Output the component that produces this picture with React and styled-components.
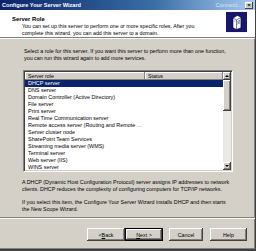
import React from 'react'
import styled, { createGlobalStyle } from 'styled-components'

const GlobalStyle = createGlobalStyle`
  html, body {
    margin: 0;
    padding: 0;
    background: #d4d0c8;
  }
  body {
    font-family: "Liberation Sans", Arial, sans-serif;
    -webkit-font-smoothing: antialiased;
  }
`

const Window = styled.div`
  width: 256px;
  height: 251px;
  box-sizing: border-box;
  display: flex;
  flex-direction: column;
  background: #d4d0c8;
  border-right: 1px solid #404040;
  border-bottom: 2px solid #404040;
  box-shadow: inset -1px -1px 0 #808080;
  overflow: hidden;
`
const TitleBar = styled.div`
  height: 10px;
  flex: none;
  display: flex;
  align-items: center;
  padding: 0 2px;
  background: linear-gradient(to right, #0a246a 0%, #3a6ea5 60%, #a6caf0 100%);
  color: white;
  font-size: 5.6px;
  font-weight: bold;
`
const TitleText = styled.span`
  flex: 1;
  white-space: nowrap;
`
const TitleGhost = styled.span`
  color: #d8e6f6;
  font-weight: normal;
  font-size: 5.8px;
  margin-right: 3px;
`
const CloseButton = styled.div`
  width: 8px;
  height: 7px;
  background: #d4d0c8;
  box-shadow: inset -1px -1px 0 #404040, inset 1px 1px 0 #ffffff;
  color: #000;
  font-size: 6px;
  line-height: 7px;
  text-align: center;
  font-weight: bold;
`
const Header = styled.div`
  height: 28px;
  box-sizing: border-box;
  flex: none;
  background: white;
  display: flex;
  justify-content: space-between;
  align-items: flex-start;
  padding: 0 8px 0 12px;
  border-bottom: 1px solid #808080;
  box-shadow: 0 1px 0 #ffffff;
`
const HeaderText = styled.div`
  padding-top: 6px;
`
const HeaderTitle = styled.div`
  font-size: 5.9px;
  font-weight: bold;
  color: #000;
  line-height: 7px;
`
const HeaderSub = styled.div`
  font-size: 5.3px;
  line-height: 6.5px;
  color: #000;
  padding-left: 10px;
  width: 190px;
`
const IconBox = styled.div`
  margin-top: 1px;
  line-height: 0;
`
const Body = styled.div`
  flex: 1;
  padding: 10px 20px 0 24px;
  font-size: 5.35px;
  line-height: 6.5px;
  color: #000;
  display: flex;
  flex-direction: column;
`
const Para = styled.p`
  margin: 0 0 ${(p) => p.gap || 0}px ${(p) => p.indent || 0}px;
  width: ${(p) => p.width || 205}px;
`
const ListView = styled.div`
  margin: 9px 0 7px -1px;
  width: 210px;
  height: 102px;
  box-sizing: border-box;
  background: white;
  border: 1px solid;
  border-color: #808080 #ffffff #ffffff #808080;
  box-shadow: inset 1px 1px 0 #404040, inset -1px -1px 0 #d4d0c8;
  display: flex;
  padding: 1px;
  font-size: 5.45px;
`
const ListMain = styled.div`
  flex: 1;
  display: flex;
  flex-direction: column;
  min-width: 0;
`
const HeaderRow = styled.div`
  display: flex;
  height: 8px;
  flex: none;
`
const ColHead = styled.div`
  width: ${(p) => p.width}px;
  flex: ${(p) => (p.width ? 'none' : 1)};
  box-sizing: border-box;
  background: #d4d0c8;
  box-shadow: inset -1px -1px 0 #808080, inset 1px 1px 0 #ffffff;
  padding-left: 3px;
  line-height: 8px;
  font-size: 5.3px;
`
const Row = styled.div`
  height: 7px;
  line-height: 7px;
  display: flex;
  background: ${(p) => (p.selected ? '#0a246a' : 'transparent')};
  color: ${(p) => (p.selected ? '#ffffff' : '#000000')};
`
const Cell = styled.div`
  width: ${(p) => p.width}px;
  flex: ${(p) => (p.width ? 'none' : 1)};
  box-sizing: border-box;
  padding: 0 2px 0 3px;
  white-space: nowrap;
  overflow: hidden;
  text-overflow: ellipsis;
`
const ScrollBar = styled.div`
  width: 8px;
  flex: none;
  display: flex;
  flex-direction: column;
  background-color: #ebe9e4;
`
const ScrollBtn = styled.div`
  height: 8px;
  flex: none;
  background: #d4d0c8;
  box-shadow: inset -1px -1px 0 #404040, inset 1px 1px 0 #ffffff, inset -2px -2px 0 #808080;
  display: flex;
  align-items: center;
  justify-content: center;
`
const Thumb = styled.div`
  height: 31px;
  flex: none;
  background: #d4d0c8;
  box-shadow: inset -1px -1px 0 #404040, inset 1px 1px 0 #ffffff, inset -2px -2px 0 #808080;
`
const Track = styled.div`
  flex: 1;
`
const Arrow = styled.div`
  width: 0;
  height: 0;
  border-left: 2px solid transparent;
  border-right: 2px solid transparent;
  ${(p) => (p.down ? 'border-top: 2px solid #000;' : 'border-bottom: 2px solid #000;')}
`
const Footer = styled.div`
  height: 29px;
  flex: none;
  border-top: 1px solid #808080;
  box-shadow: inset 0 1px 0 #ffffff;
  display: flex;
  align-items: center;
  justify-content: flex-end;
  padding: 2px 8px 0 0;
`
const ButtonGroup = styled.div`
  display: flex;
  margin-right: ${(p) => p.space || 0}px;
`
const Button = styled.div`
  width: ${(p) => p.w || 37}px;
  height: 13px;
  box-sizing: border-box;
  background: #d4d0c8;
  box-shadow: inset -1px -1px 0 #404040, inset 1px 1px 0 #ffffff, inset -2px -2px 0 #808080;
  border: ${(p) => (p.def ? '1px solid #000' : 'none')};
  display: flex;
  align-items: center;
  justify-content: center;
  font-size: 5.35px;
  color: #000;
  margin-left: ${(p) => p.gap || 0}px;
  u { text-decoration: underline; }
`

const ServerIcon = () => (
  <svg width="21" height="22" viewBox="0 0 24 23">
    <rect width="24" height="23" fill="#16166a" />
    <path d="M8 7 L13 4 L17 6 L17 18 L12 20 L8 18 Z" fill="#ffffff" stroke="#000033" strokeWidth="0.6" />
    <path d="M12 9 L17 6.5 M12 9 L8 7 M12 9 L12 20" stroke="#000033" strokeWidth="0.6" fill="none" />
    <path d="M13 11 L16 9.5 M13 12.5 L16 11 M13 14 L16 12.5" stroke="#16166a" strokeWidth="0.6" />
    <rect x="9" y="10" width="2" height="1" fill="#9999cc" />
  </svg>
)

const roles = [
  'DHCP server',
  'DNS server',
  'Domain Controller (Active Directory)',
  'File server',
  'Print server',
  'Real Time Communication server',
  'Remote access server (Routing and Remote Access)',
  'Server cluster node',
  'SharePoint Team Services',
  'Streaming media server (WMS)',
  'Terminal server',
  'Web server (IIS)',
  'WINS server',
]

export default function App() {
  return (
    <>
      <GlobalStyle />
      <Window>
        <TitleBar>
          <TitleText>Configure Your Server Wizard</TitleText>
          <TitleGhost>Connect...</TitleGhost>
          <CloseButton>×</CloseButton>
        </TitleBar>
        <Header>
          <HeaderText>
            <HeaderTitle>Server Role</HeaderTitle>
            <HeaderSub>
              You can set up this server to perform one or more specific roles. After you complete this wizard, you can add this server to a domain.
            </HeaderSub>
          </HeaderText>
          <IconBox>
            <ServerIcon />
          </IconBox>
        </Header>
        <Body>
          <Para>
            Select a role for this server. If you want this server to perform more than one function, you can run this wizard again to add more services.
          </Para>
          <ListView>
            <ListMain>
              <HeaderRow>
                <ColHead width={120}>Server role</ColHead>
                <ColHead>Status</ColHead>
              </HeaderRow>
              {roles.map((r, i) => (
                <Row key={r} selected={i === 0}>
                  <Cell width={120}>{r}</Cell>
                  <Cell />
                </Row>
              ))}
            </ListMain>
            <ScrollBar>
              <ScrollBtn><Arrow /></ScrollBtn>
              <Thumb />
              <Track />
              <ScrollBtn><Arrow down /></ScrollBtn>
            </ScrollBar>
          </ListView>
          <Para gap={7} indent={-2} width={214}>
            A DHCP (Dynamic Host Configuration Protocol) server assigns IP addresses to network clients. DHCP reduces the complexity of configuring computers for TCP/IP networks.
          </Para>
          <Para indent={-2} width={208}>
            If you select this item, the Configure Your Server Wizard installs DHCP and then starts the New Scope Wizard.
          </Para>
        </Body>
        <Footer>
          <ButtonGroup space={6}>
            <Button w={38}>&lt; <u>B</u>ack</Button>
            <Button w={38} def><u>N</u>ext &gt;</Button>
          </ButtonGroup>
          <Button w={34}>Cancel</Button>
          <Button gap={7}>Help</Button>
        </Footer>
      </Window>
    </>
  )
}
